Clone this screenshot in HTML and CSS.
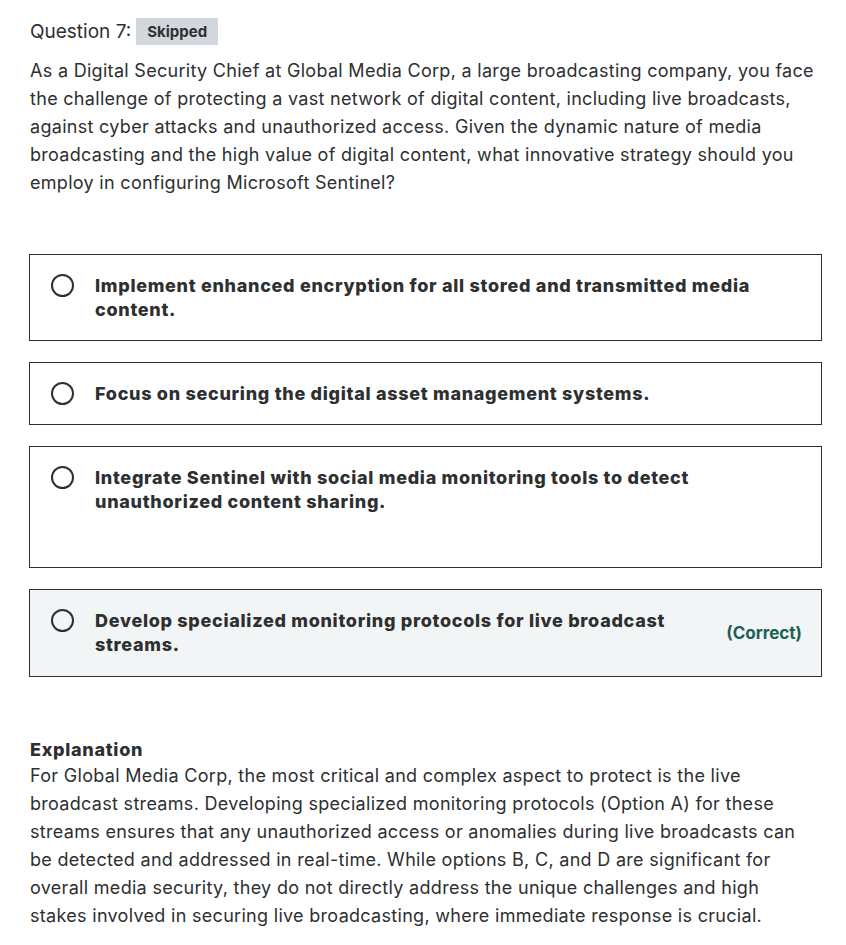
FILE: index.html
```html
<!DOCTYPE html>
<html>
<head>
<meta charset="utf-8">
<link rel="stylesheet" href="styles.css">
</head>
<body>
<div class="page">
  <div class="q-head">
    <span class="q-title">Question 7:</span>
    <span class="badge">Skipped</span>
  </div>
  <p class="q-text">As a Digital Security Chief at Global Media Corp, a large broadcasting company, you face the challenge of protecting a vast network of digital content, including live broadcasts, against cyber attacks and unauthorized access. Given the dynamic nature of media broadcasting and the high value of digital content, what innovative strategy should you employ in configuring Microsoft Sentinel?</p>

  <div class="options">
    <div class="option">
      <span class="radio"></span>
      <div class="opt-text">Implement enhanced encryption for all stored and transmitted media content.</div>
    </div>
    <div class="option">
      <span class="radio"></span>
      <div class="opt-text">Focus on securing the digital asset management systems.</div>
    </div>
    <div class="option tall">
      <span class="radio"></span>
      <div class="opt-text">Integrate Sentinel with social media monitoring tools to detect unauthorized content sharing.</div>
    </div>
    <div class="option correct">
      <span class="radio"></span>
      <div class="opt-text narrow">Develop specialized monitoring protocols for live broadcast streams.</div>
      <span class="correct-label">(Correct)</span>
    </div>
  </div>

  <div class="explanation">
    <h3 class="exp-title">Explanation</h3>
    <p class="exp-text">For Global Media Corp, the most critical and complex aspect to protect is the live broadcast streams. Developing specialized monitoring protocols (Option A) for these streams ensures that any unauthorized access or anomalies during live broadcasts can be detected and addressed in real-time. While options B, C, and D are significant for overall media security, they do not directly address the unique challenges and high stakes involved in securing live broadcasting, where immediate response is crucial.</p>
  </div>
</div>
</body>
</html>
```

FILE: styles.css
```css
* { box-sizing: border-box; }
html, body { margin: 0; padding: 0; background: #ffffff; }
body {
  font-family: "Inter", "Noto Sans", "Liberation Sans", sans-serif;
  color: #2d2f31;
}
.page {
  width: 846px;
  padding: 18px 24px 0 29px;
}
.q-head {
  display: flex;
  align-items: center;
  gap: 5px;
  height: 27px;
}
.q-title {
  font-size: 19px;
  line-height: 27px;
  padding-left: 1px;
}
.badge {
  background: #d1d7dc;
  font-weight: 700;
  font-size: 15px;
  line-height: 27px;
  height: 27px;
  padding: 0 11px;
}
.q-text {
  margin: 12px 0 0 1px;
  font-size: 18px;
  letter-spacing: 0.3px;
  line-height: 28px;
  width: 792px;
}
.options {
  margin-top: 57px;
  display: flex;
  flex-direction: column;
  gap: 21px;
  width: 793px;
}
.option {
  border: 1px solid #2d2f31;
  display: flex;
  align-items: flex-start;
  padding: 19px 19px 18px 21px;
}
.option.tall { padding-bottom: 53px; }
.option.correct {
  background: #f2f5f5;
  align-items: center;
  padding-bottom: 19px;
}
.radio {
  flex: none;
  width: 23px;
  height: 23px;
  border: 2px solid #2d2f31;
  border-radius: 50%;
  margin-right: 21px;
}
.option.correct .radio { align-self: flex-start; }
.opt-text {
  font-size: 18px;
  font-weight: 800;
  letter-spacing: 0.7px;
  line-height: 24px;
  flex: 1;
  padding-right: 50px;
}
.opt-text.narrow { padding-right: 60px; }
.correct-label {
  flex: none;
  font-size: 17px;
  font-weight: 700;
  color: #1e6055;
  line-height: 24px;
}
.explanation {
  margin-top: 61px;
}
.exp-title {
  margin: 0;
  font-size: 18px;
  font-weight: 800;
  letter-spacing: 0.7px;
  line-height: 24px;
  padding-left: 1px;
}
.exp-text {
  margin: 0;
  font-size: 18px;
  letter-spacing: 0.3px;
  line-height: 28px;
  padding-left: 1px;
  width: 792px;
}
```
